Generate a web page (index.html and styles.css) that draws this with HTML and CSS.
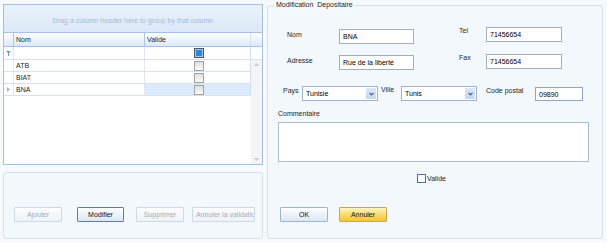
FILE: index.html
```html
<!DOCTYPE html>
<html>
<head>
    <title>Depositaires</title>
    <link rel="stylesheet" href="styles.css">
</head>
<body>
<div class="page">

    <div class="left">
        <div class="grid">
            <div class="group-panel">Drag a column header here to group by that column</div>

            <div class="row head">
                <div class="ind"></div>
                <div class="c-nom">Nom</div>
                <div class="c-val">Valide</div>
                <div class="c-fill"></div>
            </div>

            <div class="row filter">
                <div class="ind">
                    <svg width="5" height="5" viewBox="0 0 5 5"><path d="M0 0H5L3 2V5H2V2Z" fill="#6a9ad4"/></svg>
                </div>
                <div class="c-nom"></div>
                <div class="c-val"><span class="check on"></span></div>
                <div class="c-fill"></div>
            </div>

            <div class="grid-body">
                <div class="rows">
                    <div class="row">
                        <div class="ind"></div>
                        <div class="c-nom">ATB</div>
                        <div class="c-val"><span class="check"></span></div>
                    </div>
                    <div class="row">
                        <div class="ind"></div>
                        <div class="c-nom">BIAT</div>
                        <div class="c-val"><span class="check"></span></div>
                    </div>
                    <div class="row sel">
                        <div class="ind">
                            <svg width="3" height="5" viewBox="0 0 3 5"><path d="M0 0L3 2.5L0 5Z" fill="#9fb6d2"/></svg>
                        </div>
                        <div class="c-nom">BNA</div>
                        <div class="c-val"><span class="check"></span></div>
                    </div>
                </div>
                <div class="scrollbar">
                    <svg width="5" height="3" viewBox="0 0 5 3"><path d="M0 3L2.5 0L5 3Z" fill="#c8ccd2"/></svg>
                    <svg width="5" height="3" viewBox="0 0 5 3"><path d="M0 0L2.5 3L5 0Z" fill="#c8ccd2"/></svg>
                </div>
            </div>
        </div>

        <div class="actions">
            <button class="btn b-add" disabled>Ajouter</button>
            <button class="btn b-edit">Modifier</button>
            <button class="btn b-del" disabled>Supprimer</button>
            <button class="btn b-undo" disabled>Annuler la validatio</button>
        </div>
    </div>

    <div class="editor">
        <div class="legend">Modification&nbsp; Depositaire</div>

        <div class="line line-a">
            <label class="lbl l-nom">Nom</label>
            <input class="field f-left f-nom" value="BNA">
            <label class="lbl l-tel">Tel</label>
            <input class="field f-right" value="71456654">
        </div>

        <div class="line line-b">
            <label class="lbl l-adr">Adresse</label>
            <input class="field f-left f-adr" value="Rue de la liberté">
            <label class="lbl l-fax">Fax</label>
            <input class="field f-right" value="71456654">
        </div>

        <div class="line line-c">
            <label class="lbl l-pays">Pays</label>
            <div class="combo"><span>Tunisie</span><span class="drop"><svg width="5" height="4" viewBox="0 0 5 4"><path d="M0.5 0.8L2.5 2.8L4.5 0.8" fill="none" stroke="#2f507e" stroke-width="1.1"/></svg></span></div>
            <label class="lbl l-ville">Ville</label>
            <div class="combo"><span>Tunis</span><span class="drop"><svg width="5" height="4" viewBox="0 0 5 4"><path d="M0.5 0.8L2.5 2.8L4.5 0.8" fill="none" stroke="#2f507e" stroke-width="1.1"/></svg></span></div>
            <label class="lbl l-cp">Code postal</label>
            <input class="field f-cp" value="09890">
        </div>

        <div class="comment">
            <label class="lbl">Commentaire</label>
            <textarea class="memo"></textarea>
        </div>

        <div class="valid">
            <span class="box"></span>
            <span>Valide</span>
        </div>

        <div class="footer">
            <button class="btn b-ok">OK</button>
            <button class="btn b-cancel">Annuler</button>
        </div>
    </div>

</div>
</body>
</html>
```

FILE: styles.css
```css
body {
    margin: 0;
    background: #f7fafd;
    font-family: "Liberation Sans", Arial, sans-serif;
    font-size: 7px;
    color: #1e1e1e;
}

.page {
    display: flex;
    gap: 4px;
    padding: 4px 0 0 3px;
}

/* left side : grid + buttons */
.left {
    width: 260px;
    display: flex;
    flex-direction: column;
    gap: 7px;
}

.grid {
    height: 161px;
    box-sizing: border-box;
    border: 1px solid #a3c0e8;
    background: #fff;
    display: flex;
    flex-direction: column;
}

.group-panel {
    height: 28px;
    box-sizing: border-box;
    padding-top: 11px;
    line-height: 9px;
    text-align: center;
    color: #a3b9d8;
    background: linear-gradient(#e9f2fb, #dce8f7);
    border-bottom: 1px solid #a3c0e8;
}

.row {
    display: flex;
    height: 12px;
    box-sizing: border-box;
    border-bottom: 1px solid #d6e2ef;
    line-height: 11px;
}

.row > div {
    box-sizing: border-box;
    border-right: 1px solid #e0e9f3;
}

.ind {
    width: 10px;
    display: flex;
    align-items: center;
    justify-content: center;
}

.c-nom {
    width: 131px;
    padding-left: 2px;
}

.c-val {
    width: 106px;
    padding-left: 2px;
}

.row > .c-val {
    border-right-color: #d0deee;
}

.row > .c-fill {
    width: 11px;
    border-right: none;
}

.head {
    height: 14px;
    line-height: 13px;
    background: linear-gradient(#fdfeff, #dde9f7);
    border-bottom-color: #a3c0e8;
}

.head > div {
    border-right-color: #a9c5e8;
}

.filter {
    height: 13px;
    line-height: 12px;
}

.check {
    display: block;
    width: 10px;
    height: 10px;
    margin: 1px auto 0;
    box-sizing: border-box;
    border: 1px solid #a2a2a2;
    background: linear-gradient(#dedede, #fbfbfb);
}

.check.on {
    margin-top: 1px;
    border-color: #4b5a6e;
    background: #2f87d9;
    box-shadow: inset 0 0 0 1px #9ec8f0;
}

.sel .c-val {
    background: #dcebfb;
}

.grid-body {
    flex: 1;
    display: flex;
}

.rows {
    width: 247px;
}

.scrollbar {
    width: 11px;
    background: #f3f4f6;
    display: flex;
    flex-direction: column;
    justify-content: space-between;
    align-items: center;
    padding: 3px 0 3px;
}

.actions {
    height: 67px;
    box-sizing: border-box;
    border: 1px solid #d4e1ec;
    border-radius: 3px;
    background: #f2f8fc;
    padding: 34px 0 0 10px;
    display: flex;
    align-items: flex-start;
}

/* buttons */
.btn {
    height: 15px;
    box-sizing: border-box;
    padding: 0;
    font: inherit;
    color: #111;
    border: 1px solid #9fb3ca;
    border-radius: 1px;
    background: linear-gradient(#fdfeff, #dbe7f5);
    white-space: nowrap;
    overflow: hidden;
}

.btn:disabled {
    color: #a3abb4;
    border-color: #cdd9e5;
    background: linear-gradient(#fbfdff, #eef3f9);
}

.b-add { width: 48px; margin-right: 15px; }
.b-edit { width: 47px; margin-right: 12px; border-color: #5d7ea6; }
.b-del { width: 48px; margin-right: 8px; }
.b-undo { width: 63px; text-align: left; padding-left: 3px; }

/* right side : edit form */
.editor {
    width: 336px;
    height: 234px;
    margin-top: 1px;
    box-sizing: border-box;
    border: 1px solid #d4e1ec;
    border-radius: 3px;
    background: #f2f8fc;
}

.legend {
    width: fit-content;
    margin: -6px 0 0 6px;
    padding: 0 2px;
    line-height: 10px;
    background: #f5f9fc;
}

.line {
    display: flex;
    align-items: flex-start;
}

.lbl {
    display: block;
    line-height: 9px;
}

.field {
    height: 15px;
    box-sizing: border-box;
    margin: 0;
    padding: 0 3px;
    font: inherit;
    color: #000;
    background: #fff;
    border: 1px solid #a6aeb8;
    outline: none;
}

.line-a { margin-top: 17px; padding-left: 19px; }
.line-b { margin-top: 10px; padding-left: 19px; }

.l-nom { width: 52px; margin-top: 3px; }
.l-adr { width: 52px; margin-top: 2px; }
.f-left { width: 75px; }
.f-nom { margin-top: 2px; }
.f-adr { margin-top: 1px; }
.l-tel, .l-fax { width: 27px; margin: -1px 0 0 45px; }
.f-right { width: 76px; }

.line-c { margin-top: 16px; padding-left: 15px; }
.l-pays { width: 19px; }
.l-ville { width: 20px; margin: -1px 0 0 3px; }
.l-cp { width: 49px; margin-left: 9px; }

.combo {
    width: 76px;
    height: 15px;
    box-sizing: border-box;
    border: 1px solid #9fb2cb;
    background: #fff;
    display: flex;
    align-items: center;
    justify-content: space-between;
    padding: 0 1px 0 3px;
    color: #000;
}

.drop {
    width: 10px;
    height: 11px;
    background: linear-gradient(#dbe8f7, #c3d7f0);
    display: flex;
    align-items: center;
    justify-content: center;
}

.f-cp {
    width: 48px;
    height: 14px;
    margin-top: 1px;
    border-color: #8fa6c4;
}

.comment {
    margin-top: 8px;
    padding-left: 10px;
}

.memo {
    display: block;
    width: 311px;
    height: 40px;
    margin-top: 4px;
    box-sizing: border-box;
    border: 1px solid #a9bcd2;
    background: #fff;
    resize: none;
    outline: none;
}

.valid {
    display: flex;
    align-items: center;
    gap: 1px;
    margin-top: 12px;
    padding-left: 149px;
    line-height: 9px;
}

.box {
    width: 9px;
    height: 9px;
    box-sizing: border-box;
    border: 1px solid #4d6f9c;
    background: #fff;
}

.footer {
    display: flex;
    margin-top: 24px;
    padding-left: 12px;
}

.b-ok { width: 48px; margin-right: 11px; }

.b-cancel {
    width: 48px;
    border-color: #c7a64e;
    background: linear-gradient(#fff6c4, #fbd864 55%, #f6c735);
}
```
